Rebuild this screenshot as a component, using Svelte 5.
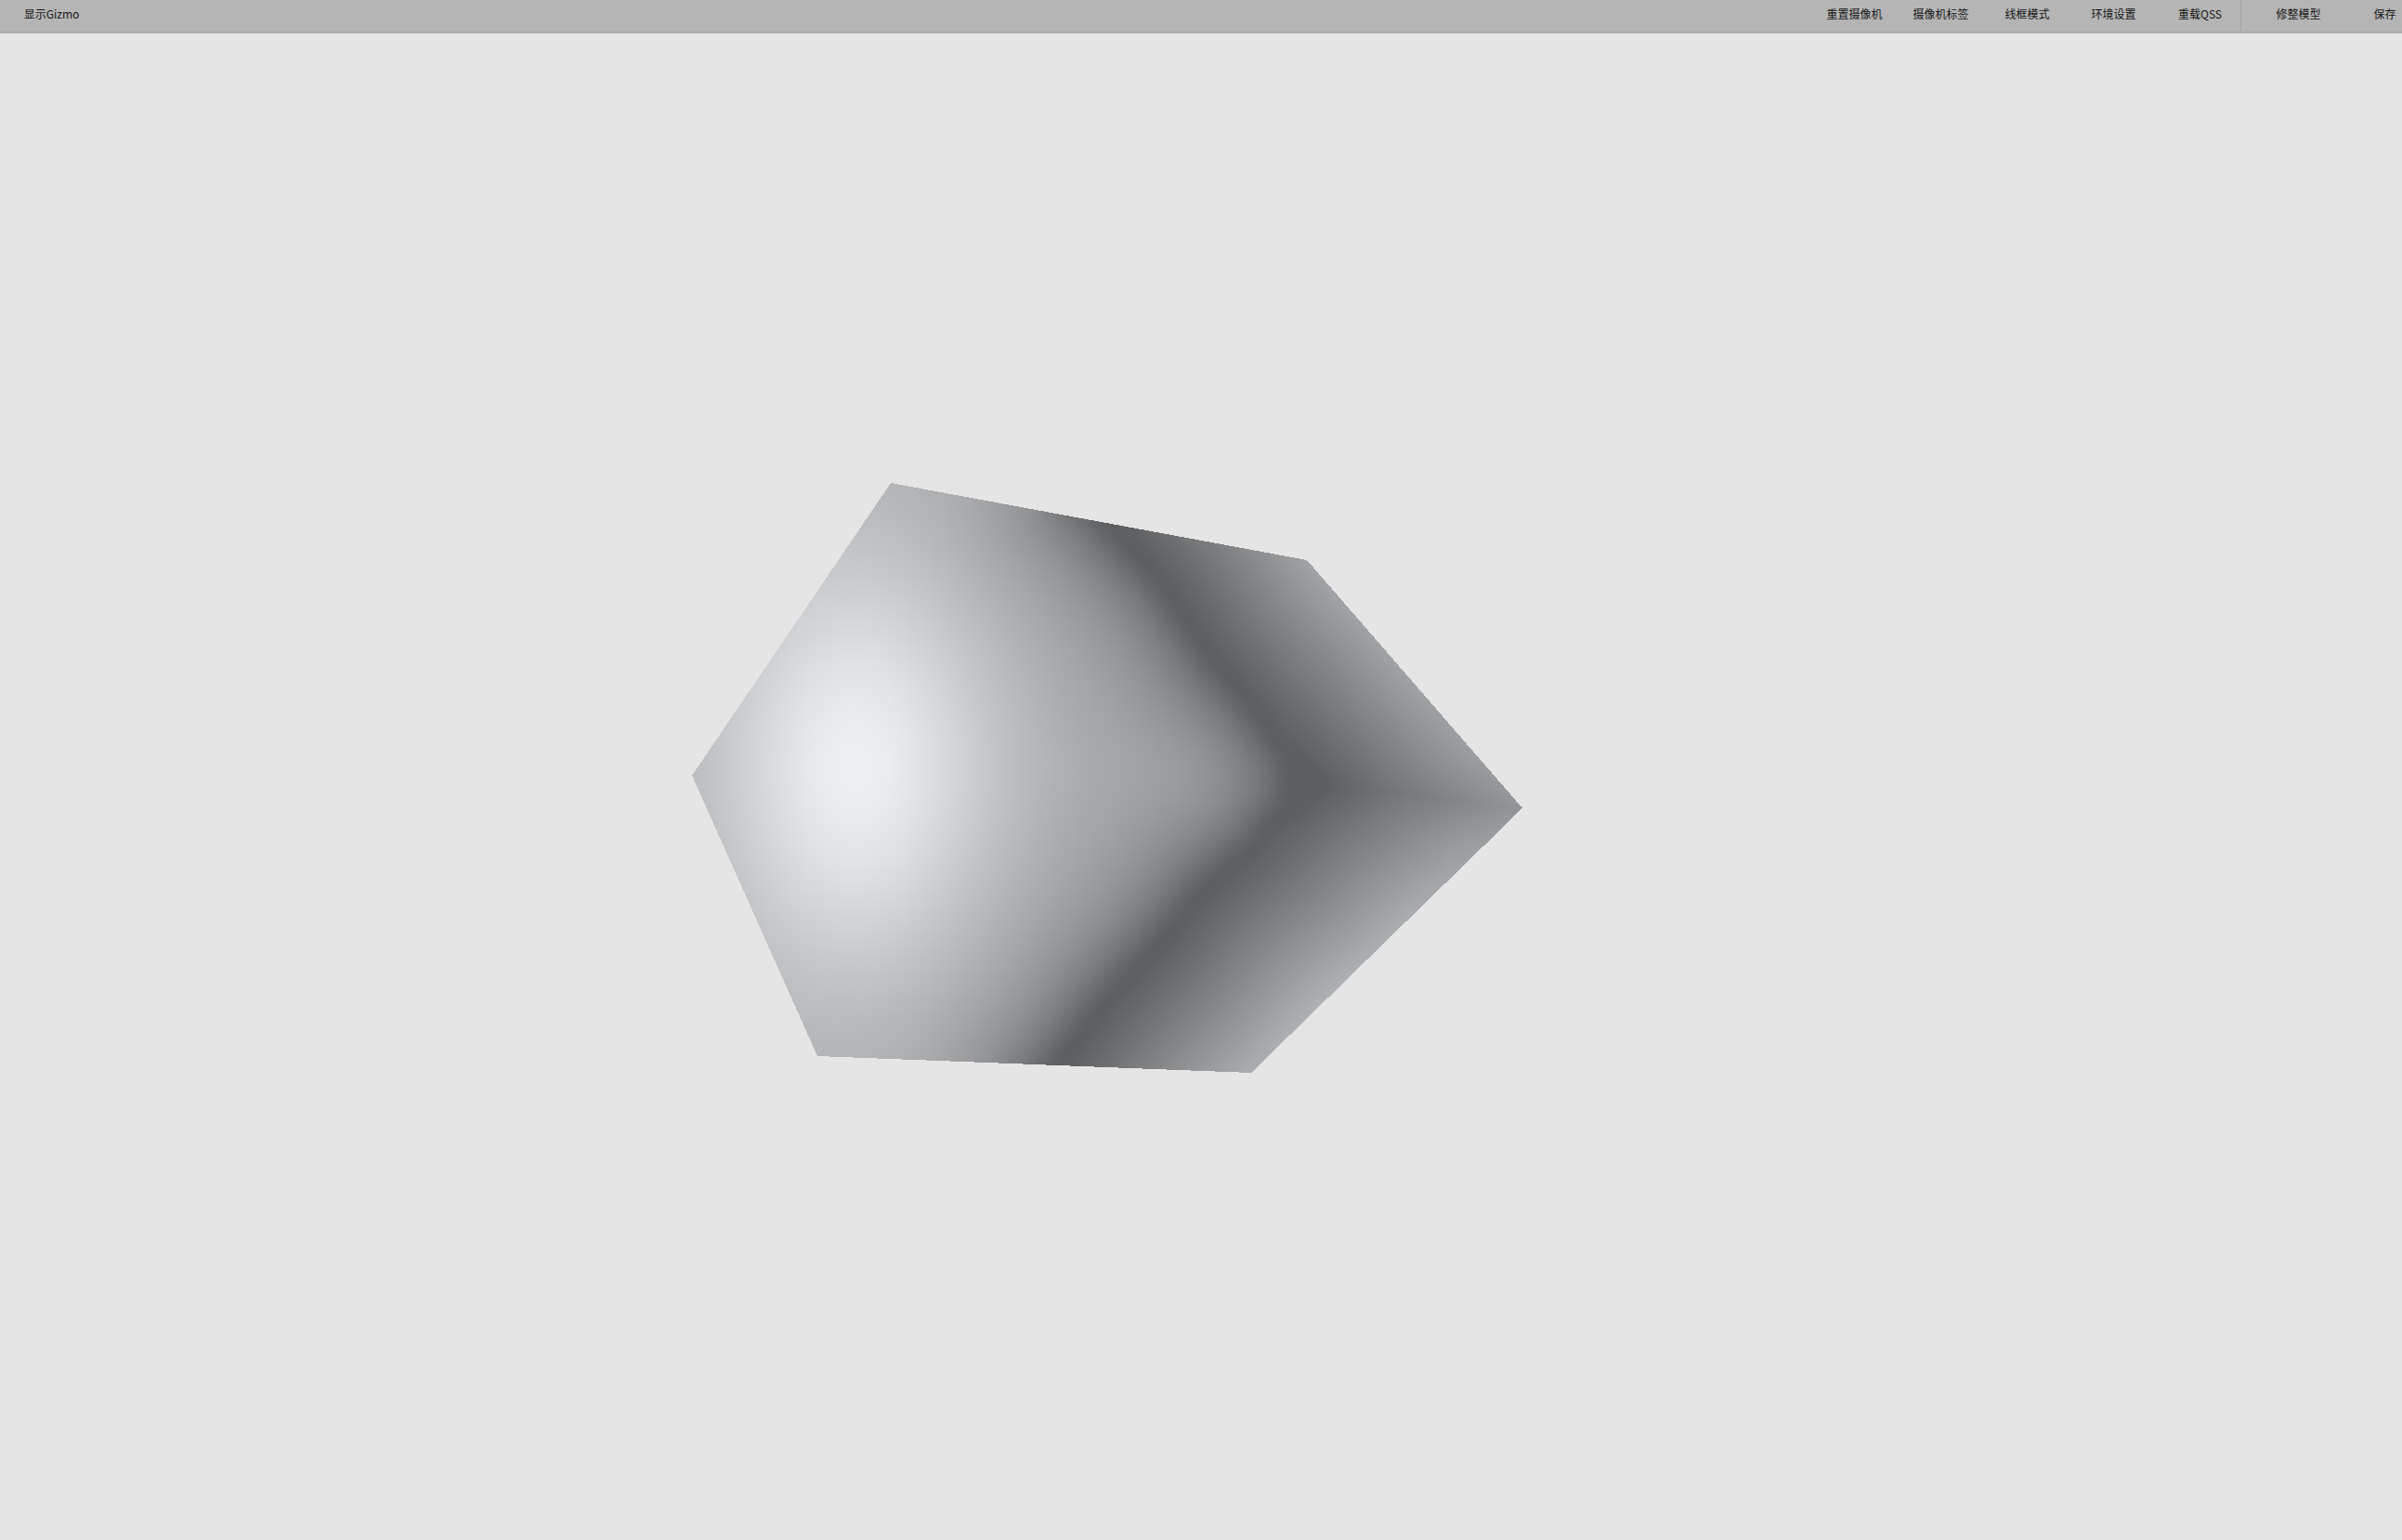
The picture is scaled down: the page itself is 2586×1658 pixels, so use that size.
<script>
	import { onMount } from 'svelte';

	const leftTools = ['显示Gizmo'];
	const rightTools = ['重置摄像机', '摄像机标签', '线框模式', '环境设置', '重载QSS'];
	const editTools = ['修整模型', '保存'];

	// viewport size; the toolbar takes the first 36px of the page
	const W = 2586;
	const H = 1622;
	const TOP = 36;

	const outline = [[959, 520], [1407, 603], [1639, 870], [1347, 1155], [880, 1137], [745, 835]];
	const upper = [[1175, 540], [1205, 574], [1253, 630], [1302, 704], [1356, 769], [1405, 843]];
	const lower = [[1405, 843], [1350, 912], [1296, 960], [1241, 1025], [1193, 1077], [1130, 1160]];
	const crease = [...upper, ...lower.slice(1)];
	const centre = [1405, 843];
	const tip = [1639, 870];
	const glow = [922, 825];

	let canvas;

	function inside(x, y) {
		let hit = false;
		for (let i = 0, j = outline.length - 1; i < outline.length; j = i++) {
			const [xi, yi] = outline[i];
			const [xj, yj] = outline[j];
			if (yi > y !== yj > y && x < ((xj - xi) * (y - yi)) / (yj - yi) + xi) hit = !hit;
		}
		return hit;
	}

	function segDist(x, y, a, b) {
		const dx = b[0] - a[0];
		const dy = b[1] - a[1];
		const t = Math.max(0, Math.min(1, ((x - a[0]) * dx + (y - a[1]) * dy) / (dx * dx + dy * dy)));
		return [Math.hypot(x - a[0] - t * dx, y - a[1] - t * dy), t];
	}

	function lineDist(x, y, line) {
		let d = Infinity;
		for (let i = 0; i < line.length - 1; i++) d = Math.min(d, segDist(x, y, line[i], line[i + 1])[0]);
		return d;
	}

	function creaseX(y) {
		for (let i = 0; i < crease.length - 1; i++) {
			const a = crease[i];
			const b = crease[i + 1];
			if (y >= a[1] && y <= b[1]) return a[0] + ((y - a[1]) / (b[1] - a[1])) * (b[0] - a[0]);
		}
		return y < crease[0][1] ? crease[0][0] : crease[crease.length - 1][0];
	}

	function softMin(a, b, k) {
		const h = Math.max(0, Math.min(1, 0.5 + (0.5 * (b - a)) / k));
		return b + (a - b) * h - k * h * (1 - h);
	}

	function shade(x, y) {
		const dUp = lineDist(x, y, upper);
		const dDown = lineDist(x, y, lower);
		const valley = 94;
		if (x < creaseX(y)) {
			// blended arms, otherwise a bright seam runs left from the centre
			const d = Math.max(0, softMin(dUp, dDown, 40));
			const soft = Math.sqrt(d * d + 100) - 10;
			const rx = (x - glow[0]) / 155;
			const ry = (y - glow[1]) / 240;
			const lit = 170 + 68 * Math.exp(-(rx * rx + ry * ry));
			return valley + (lit - valley) * (1 - Math.exp(-soft / 60));
		}
		const d = Math.min(dUp, dDown);
		const soft = Math.sqrt(d * d + 100) - 10;
		const face = Math.min(178, valley + 0.5 * soft);
		const [d3, t] = segDist(x, y, centre, tip);
		const ridge = valley + 54 * t + 0.42 * d3;
		return Math.max(valley, softMin(face, ridge, 30));
	}

	onMount(() => {
		const ctx = canvas.getContext('2d');
		const img = ctx.createImageData(W, H);
		for (let y = 500; y < 1170; y++) {
			for (let x = 730; x < 1650; x++) {
				if (!inside(x + 0.5, y + 0.5)) continue;
				const v = shade(x + 0.5, y + 0.5);
				const i = ((y - TOP) * W + x) * 4;
				// the lit side is slightly blue, as in the render
				img.data[i] = v;
				img.data[i + 1] = v + 1;
				img.data[i + 2] = v + 3;
				img.data[i + 3] = 255;
			}
		}
		ctx.putImageData(img, 0, 0);
	});
</script>

<div class="window">
	<header class="toolbar">
		<div class="group left">
			{#each leftTools as tool}
				<button class="tool">{tool}</button>
			{/each}
		</div>
		<div class="group right">
			{#each rightTools as tool}
				<button class="tool">{tool}</button>
			{/each}
			<span class="sep"></span>
			{#each editTools as tool}
				<button class="tool">{tool}</button>
			{/each}
		</div>
	</header>
	<main class="viewport">
		<canvas bind:this={canvas} width={W} height={H}></canvas>
	</main>
</div>

<style>
	:global(body) {
		margin: 0;
		background: #e5e5e5;
	}

	.window {
		width: 2586px;
		height: 1658px;
		overflow: hidden;
		display: flex;
		flex-direction: column;
		font-family: 'Noto Sans CJK SC', 'Liberation Sans', sans-serif;
	}

	.toolbar {
		flex: none;
		height: 33px;
		border-bottom: 3px solid #aeaeae;
		background: #b5b5b5;
		display: flex;
		justify-content: space-between;
	}

	.group {
		display: flex;
		flex: none;
	}

	.left {
		padding-left: 9px;
	}

	.right {
		margin-right: -28px;
	}

	.tool {
		width: 93px;
		height: 29px;
		padding: 0;
		border: none;
		background: none;
		color: #141414;
		font: inherit;
		font-size: 12px;
		white-space: nowrap;
	}

	.sep {
		width: 1px;
		height: 33px;
		margin: 0 15px 0 -3px;
		background: #a3a3a3;
	}

	.viewport {
		flex: 1;
		background: #e5e5e5;
	}

	canvas {
		display: block;
	}
</style>
